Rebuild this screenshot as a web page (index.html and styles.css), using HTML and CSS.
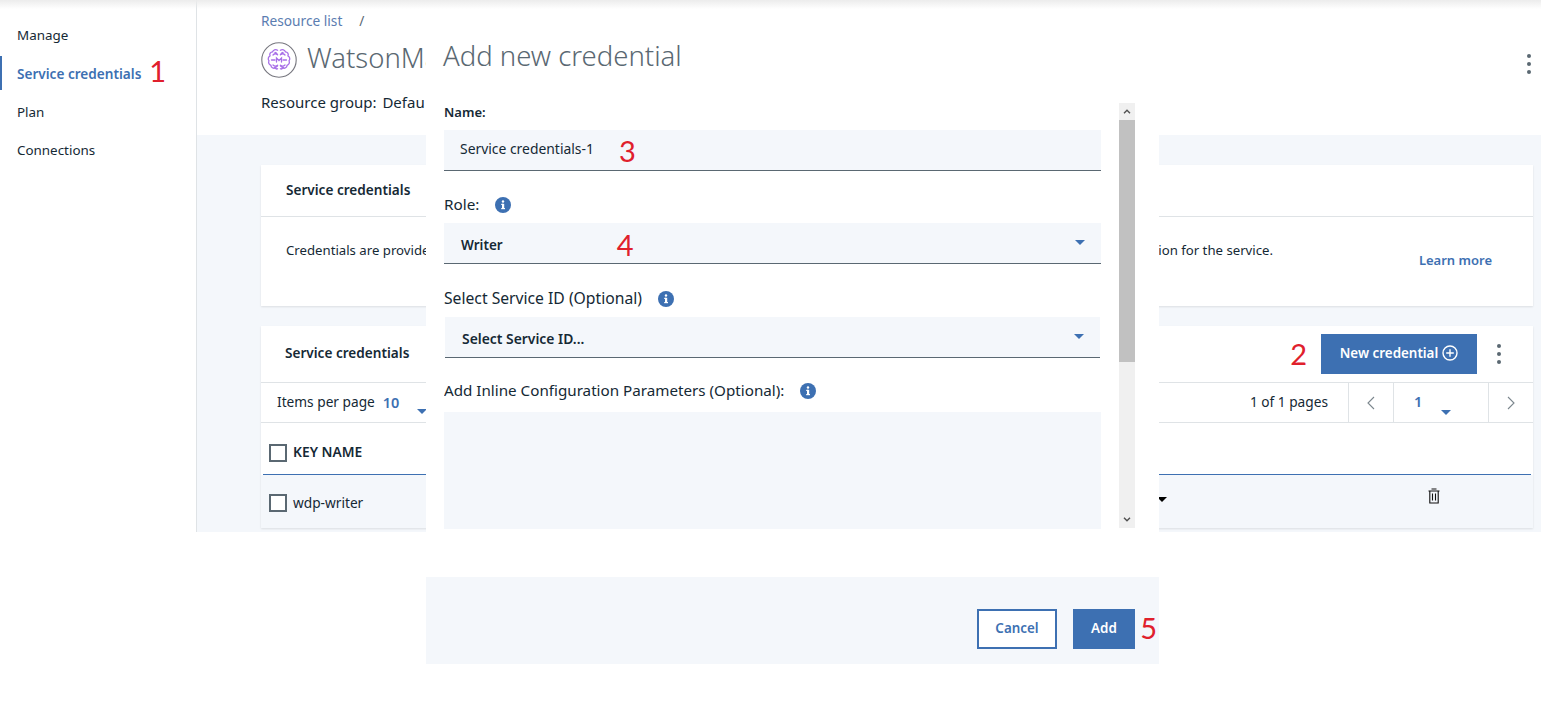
FILE: index.html
```html
<!DOCTYPE html>
<html lang="en">
<head>
    <meta charset="UTF-8">
    <title>Service credentials</title>
    <link rel="stylesheet" href="styles.css">
</head>
<body>
    <div class="app">
        <nav class="sidebar">
            <a class="nav-item">Manage</a>
            <a class="nav-item active">Service credentials <span class="mark mark-nav">1</span></a>
            <a class="nav-item">Plan</a>
            <a class="nav-item">Connections</a>
        </nav>

        <main class="main">
            <header class="page-header">
                <div class="breadcrumb"><a>Resource list</a><span class="crumb-sep">/</span></div>
                <div class="title-row">
                    <svg class="logo" viewBox="0 0 36 36" fill="none">
                        <circle cx="18" cy="18" r="17.2" stroke="#77777f" stroke-width="1.1"/>
                        <g stroke="#a86fe8" stroke-width="1.3" stroke-linecap="round">
                            <path d="M16.6 8.2c-2-1.2-4.4-.4-5 1.6-2.200.1-3.400 2.200-2.600 4-1.900 1-2.300 3.400-1 5-1 1.900 0 4 1.900 4.500.3 2.200 2.300 3.500 4.300 2.700 1 1 1.700 1.200 2.400.8"/>
                            <path d="M19.400 8.200c2-1.200 4.400-.4 5 1.600 2.200.1 3.400 2.200 2.600 4 1.900 1 2.300 3.400 1 5 1 1.900 0 4-1.900 4.500-.3 2.200-2.300 3.500-4.300 2.700-1 1-1.700 1.200-2.400.8"/>
                            <path d="M12 13c1.500-1.500 3.500-1.300 4.600-.2M24 13c-1.500-1.500-3.500-1.300-4.600-.2"/>
                            <path d="M14 10.500c1 .2 1.800.8 2 1.700M22 10.500c-1 .2-1.800.8-2 1.700M13.500 25.500c1-.2 2.300-.6 3-1.700M22.500 25.500c-1-.2-2.300-.6-3-1.700"/>
                            <path d="M10.500 18h3.500M25.500 18H22M12 23c1.500 1.400 3.500 1.200 4.600.2M24 23c-1.500 1.400-3.500 1.200-4.600.2"/>
                            <path d="M15.500 20v-4l2.500 2.500 2.500-2.500v4"/>
                        </g>
                    </svg>
                    <h1 class="page-title">WatsonMa</h1>
                    <svg class="kebab kebab-page" viewBox="0 0 4 20"><circle cx="2" cy="2" r="2"/><circle cx="2" cy="10" r="2"/><circle cx="2" cy="18" r="2"/></svg>
                </div>
                <p class="resource-group">Resource group: <span class="group-name">Defau</span></p>
            </header>

            <section class="content">
                <div class="card info-card">
                    <h3 class="card-title">Service credentials</h3>
                    <div class="info-body">
                        <p class="info-text"><span>Credentials are provide</span><span>ion for the service.</span></p>
                        <a class="learn-more">Learn more</a>
                    </div>
                </div>

                <div class="card table-card">
                    <div class="table-head">
                        <h3 class="table-title">Service credentials</h3>
                        <span class="mark mark-new">2</span>
                        <button class="btn btn-new">New credential
                            <svg class="plus-icon" viewBox="0 0 16 16" fill="none" stroke="#fff" stroke-width="1.400"><circle cx="8" cy="8" r="7"/><path d="M8 4.200v7.600M4.200 8h7.600"/></svg>
                        </button>
                        <svg class="kebab kebab-table" viewBox="0 0 4 20"><circle cx="2" cy="2" r="2"/><circle cx="2" cy="10" r="2"/><circle cx="2" cy="18" r="2"/></svg>
                    </div>
                    <div class="toolbar">
                        <div class="per-page">Items per page <b class="blue-num">10</b><i class="caret caret-items"></i></div>
                        <div class="pager">
                            <span class="page-count">1 of 1 pages</span>
                            <span class="page-btn prev"><svg viewBox="0 0 8 14" fill="none" stroke="#7b868d" stroke-width="1.100"><path d="M7 1 1 7l6 6"/></svg></span>
                            <span class="page-select"><b class="blue-num">1</b><i class="caret caret-page"></i></span>
                            <span class="page-btn next"><svg viewBox="0 0 8 14" fill="none" stroke="#7b868d" stroke-width="1.100"><path d="m1 1 6 6-6 6"/></svg></span>
                        </div>
                    </div>
                    <div class="col-row">
                        <span class="checkbox"></span><span class="col-name">KEY NAME</span>
                    </div>
                    <div class="data-row">
                        <span class="checkbox"></span><span class="key-name">wdp-writer</span>
                        <i class="caret caret-black"></i>
                        <svg class="trash" viewBox="0 0 12 16" fill="none" stroke="#111" stroke-width="1.100"><path d="M3.500 1h5M.5 3h11M1.800 3v12h8.400V3M4.500 5.500v7M7.500 5.500v7"/></svg>
                    </div>
                </div>
            </section>
        </main>
    </div>

    <div class="modal">
        <h2 class="modal-title">Add new credential</h2>
        <div class="modal-body">
            <div class="fields">
                <label class="field-label label-name">Name:</label>
                <div class="field field-name">Service credentials-1 <span class="mark mark-name">3</span></div>

                <label class="field-label">Role:
                    <svg class="info" viewBox="0 0 16 16"><circle cx="8" cy="8" r="8" fill="#3d70b2"/><rect x="7" y="6.800" width="2.200" height="5.200" fill="#fff"/><rect x="6.200" y="6.800" width="2" height="1.200" fill="#fff"/><rect x="6.200" y="11" width="3.800" height="1.200" fill="#fff"/><circle cx="8" cy="4.500" r="1.200" fill="#fff"/></svg>
                </label>
                <div class="field select">Writer <span class="mark mark-role">4</span><i class="caret caret-select"></i></div>

                <label class="field-label label-id">Select Service ID (Optional)
                    <svg class="info" viewBox="0 0 16 16"><circle cx="8" cy="8" r="8" fill="#3d70b2"/><rect x="7" y="6.800" width="2.200" height="5.200" fill="#fff"/><rect x="6.200" y="6.800" width="2" height="1.200" fill="#fff"/><rect x="6.200" y="11" width="3.800" height="1.200" fill="#fff"/><circle cx="8" cy="4.500" r="1.200" fill="#fff"/></svg>
                </label>
                <div class="field select select-id">Select Service ID...<i class="caret caret-select"></i></div>

                <label class="field-label label-inline">Add Inline Configuration Parameters (Optional):
                    <svg class="info" viewBox="0 0 16 16"><circle cx="8" cy="8" r="8" fill="#3d70b2"/><rect x="7" y="6.800" width="2.200" height="5.200" fill="#fff"/><rect x="6.200" y="6.800" width="2" height="1.200" fill="#fff"/><rect x="6.200" y="11" width="3.800" height="1.200" fill="#fff"/><circle cx="8" cy="4.500" r="1.200" fill="#fff"/></svg>
                </label>
                <div class="textarea"></div>
            </div>
            <div class="scrollbar">
                <span class="scroll-arrow"><svg viewBox="0 0 8 5" fill="none" stroke="#505050" stroke-width="1.400"><path d="m1 4.200 3-3 3 3"/></svg></span>
                <span class="scroll-thumb"></span>
                <span class="scroll-track"></span>
                <span class="scroll-arrow"><svg viewBox="0 0 8 5" fill="none" stroke="#505050" stroke-width="1.400"><path d="m1 .8 3 3 3-3"/></svg></span>
            </div>
        </div>
        <div class="modal-footer">
            <button class="btn btn-cancel">Cancel</button>
            <button class="btn btn-add">Add</button>
            <span class="mark mark-add">5</span>
        </div>
    </div>
</body>
</html>
```

FILE: styles.css
```css
body {
    margin: 0;
    width: 1543px;
    height: 702px;
    overflow: hidden;
    position: relative;
    background-color: #fff;
    font-family: "Noto Sans", Arial, sans-serif;
    font-size: 13.7px;
    color: #152935;
}

/* soft shadow along the top of the window */
body::before {
    content: "";
    position: absolute;
    top: 0;
    left: 0;
    width: 1541px;
    height: 9px;
    z-index: 5;
    background: linear-gradient(#ececec, rgba(255, 255, 255, 0));
}

h1, h2, h3, p {
    margin: 0;
    font-weight: normal;
}

.app {
    display: flex;
    width: 1541px;
    height: 532px;
    overflow: hidden;
}

.sidebar {
    width: 196px;
    flex-shrink: 0;
    padding-top: 16px;
    border-right: 1px solid #dfe3e6;
}

.nav-item {
    display: flex;
    align-items: center;
    position: relative;
    height: 38.400px;
    padding-left: 17px;
    font-size: 13.400px;
}

.nav-item.active {
    color: #3d70b2;
    font-weight: 600;
    font-size: 13.600px;
}

.nav-item.active::before {
    content: "";
    position: absolute;
    left: 0;
    top: 2px;
    width: 2px;
    height: 34px;
    background-color: #3d70b2;
}

/* red step numbers painted on the screenshot */
.mark {
    font-family: Lato, sans-serif;
    font-size: 29px;
    line-height: 1;
    font-weight: normal;
    color: #e0202c;
}

.mark-nav {
    margin: -6px 0 0 8px;
}

.main {
    flex: 1;
    display: flex;
    flex-direction: column;
    min-width: 0;
}

.page-header {
    height: 135px;
    flex-shrink: 0;
    box-sizing: border-box;
    padding: 12px 8px 0 64px;
}

.breadcrumb {
    height: 18px;
    line-height: 18px;
    color: #5b7db1;
}

.crumb-sep {
    margin-left: 17px;
    color: #5a6872;
}

.title-row {
    display: flex;
    align-items: center;
    justify-content: space-between;
    height: 36px;
    margin-top: 12px;
}

.logo {
    width: 36px;
    height: 36px;
    flex-shrink: 0;
}

/* the dialog covers the rest of this title */
.page-title {
    width: 119px;
    margin: -6px auto 0 10px;
    overflow: hidden;
    font-size: 27.500px;
    font-weight: 300;
    color: #5a6872;
    white-space: nowrap;
}

.kebab {
    fill: #5a6872;
}

.kebab-page {
    width: 4px;
    height: 20px;
    margin-right: 2px;
    margin-top: 8px;
}

.resource-group {
    margin-top: 14px;
    font-size: 15px;
    line-height: 20px;
    white-space: nowrap;
}

.group-name {
    margin-left: 2px;
}

.content {
    flex: 1;
    padding: 30px 8px 0 64px;
    background-color: #f4f7fb;
}

.card {
    background-color: #fff;
    box-shadow: 0 1px 2px rgba(0, 0, 0, 0.1);
}

.info-card {
    height: 141px;
    margin-bottom: 20px;
}

.card-title {
    height: 52px;
    box-sizing: border-box;
    padding: 0 25px;
    line-height: 50px;
    font-size: 13.600px;
    font-weight: 600;
    border-bottom: 1px solid #dfe3e6;
}

.info-body {
    display: flex;
    padding: 23px 41px 0 25px;
    justify-content: space-between;
}

.info-text {
    display: flex;
    justify-content: space-between;
    width: 987px;
    line-height: 20px;
    font-size: 13.200px;
}

.learn-more {
    margin-top: 10px;
    line-height: 20px;
    font-size: 13px;
    font-weight: 600;
    color: #3d70b2;
}

.table-head {
    display: flex;
    align-items: center;
    height: 57px;
    box-sizing: border-box;
    padding: 0 32px 0 24px;
    border-bottom: 1px solid #dfe3e6;
}

.table-title {
    flex: 1;
    margin-top: -3px;
    font-weight: 600;
    font-size: 13.600px;
}

.mark-new {
    margin: -2px 14px 0 0;
}

.btn {
    font-family: inherit;
    font-size: 13.400px;
    font-weight: 600;
    height: 40px;
    border: none;
    padding: 0 0 2px;
    cursor: pointer;
}

.btn-new {
    display: flex;
    align-items: center;
    justify-content: center;
    gap: 4px;
    width: 156px;
    color: #fff;
    background-color: #3d70b2;
}

.plus-icon {
    width: 16px;
    height: 16px;
}

.kebab-table {
    width: 4px;
    height: 20px;
    margin-left: 20px;
}

.toolbar {
    display: flex;
    justify-content: space-between;
    height: 40px;
    box-sizing: border-box;
    border-bottom: 1px solid #dfe3e6;
}

.per-page {
    display: flex;
    align-items: center;
    padding: 0 0 2px 16px;
    position: relative;
}

.blue-num {
    font-size: 14.500px;
    font-weight: 600;
    color: #3d70b2;
}

.per-page .blue-num {
    margin-left: 8px;
}

.caret {
    display: block;
    width: 0;
    height: 0;
    border-left: 5px solid transparent;
    border-right: 5px solid transparent;
    border-top: 5px solid #3d70b2;
}

.caret-items {
    margin: 20px 0 0 18px;
}

.pager {
    display: flex;
    align-items: stretch;
}

.page-count {
    display: flex;
    align-items: center;
    padding: 0 20px 2px 0;
}

.page-btn {
    display: flex;
    align-items: center;
    justify-content: center;
    width: 44px;
    border-left: 1px solid #dfe3e6;
}

.page-btn svg {
    width: 8px;
    height: 14px;
}

.page-select {
    display: flex;
    width: 95px;
    padding-left: 20px;
    box-sizing: border-box;
    border-left: 1px solid #dfe3e6;
    align-items: center;
}

.page-select .blue-num {
    margin-top: -4px;
}

.caret-page {
    margin: 20px 0 0 19px;
}

.col-row {
    display: flex;
    align-items: center;
    height: 52px;
    box-sizing: border-box;
    margin: 0 2px;
    padding: 8px 0 0 6px;
    border-bottom: 1px solid #3d70b2;
}

.checkbox {
    width: 14px;
    height: 14px;
    border: 2px solid #5a6872;
    background-color: #fff;
    flex-shrink: 0;
}

.col-name {
    margin: -2px 0 0 6px;
    font-size: 13.800px;
    font-weight: 600;
}

.data-row {
    display: flex;
    align-items: center;
    height: 51px;
    padding: 2px 0 0 8px;
    background-color: #f4f7fb;
}

.key-name {
    margin-left: 6px;
    width: 865px;
}

.caret-black {
    border-top-color: #000;
    margin: -6px 0 0 -1px;
}

.trash {
    width: 12px;
    height: 16px;
    margin: -14px 0 0 261px;
}

/* dialog sits over the whole page */
.modal {
    position: absolute;
    top: 0;
    left: 426px;
    z-index: 2;
    width: 733px;
    height: 664px;
    display: flex;
    flex-direction: column;
    background-color: #fff;
}

.modal-title {
    height: 104px;
    box-sizing: border-box;
    padding: 36px 0 0 17px;
    font-size: 27.500px;
    line-height: 40px;
    font-weight: 300;
    color: #5a6872;
}

.modal-body {
    display: flex;
    align-items: flex-start;
    height: 473px;
    padding-left: 18px;
}

.fields {
    width: 657px;
    height: 425px;
    overflow: hidden;
}

.field-label {
    display: flex;
    align-items: center;
    height: 20px;
    margin: 23px 0 9px;
    font-size: 15.300px;
}

.label-name {
    height: 16px;
    margin: 0 0 10px;
    font-size: 13px;
    font-weight: 600;
}

.label-id {
    margin-bottom: 9px;
    margin-top: 24px;
    font-size: 15.700px;
}

.label-inline {
    margin: 22px 0 12px;
    font-size: 15.200px;
}

.info {
    width: 16px;
    height: 16px;
    margin: 2px 0 0 16px;
}

.field {
    display: flex;
    align-items: center;
    height: 40px;
    padding-left: 16px;
    background-color: #f4f7fb;
    border-bottom: 1px solid #5a6872;
}

.field-name {
    box-sizing: border-box;
    height: 41px;
    padding-bottom: 3px;
    font-size: 13.900px;
}

.select {
    box-sizing: border-box;
    height: 41px;
    padding: 3px 0 0 17px;
    font-weight: 600;
    font-size: 13.500px;
    position: relative;
}

.select-id {
    margin: 0 1px;
    font-size: 13.900px;
}

.mark-name {
    margin: 3px 0 0 25px;
}

.mark-role {
    margin-left: 114px;
}

.caret-select {
    margin-left: auto;
    margin-right: 16px;
    margin-top: -4px;
}

.textarea {
    height: 117px;
    background-color: #f4f7fb;
}

.scrollbar {
    display: flex;
    flex-direction: column;
    width: 16px;
    height: 425px;
    margin-left: 18px;
    margin-top: -1px;
    background-color: #f0f0f0;
}

.scroll-arrow {
    display: flex;
    align-items: center;
    justify-content: center;
    height: 17px;
    flex-shrink: 0;
}

.scroll-arrow svg {
    width: 8px;
    height: 5px;
}

.scroll-thumb {
    height: 242px;
    background-color: #c1c1c1;
}

.scroll-track {
    flex: 1;
}

.modal-footer {
    display: flex;
    align-items: flex-start;
    height: 87px;
    box-sizing: border-box;
    padding: 32px 2px 0 0;
    justify-content: flex-end;
    background-color: #f4f7fb;
}

.btn-cancel {
    width: 80px;
    color: #3d70b2;
    background-color: #fff;
    border: 2px solid #3d70b2;
}

.btn-add {
    width: 62px;
    margin-left: 16px;
    color: #fff;
    background-color: #3d70b2;
}

.mark-add {
    width: 22px;
    margin-top: 4px;
    text-align: right;
}
```
